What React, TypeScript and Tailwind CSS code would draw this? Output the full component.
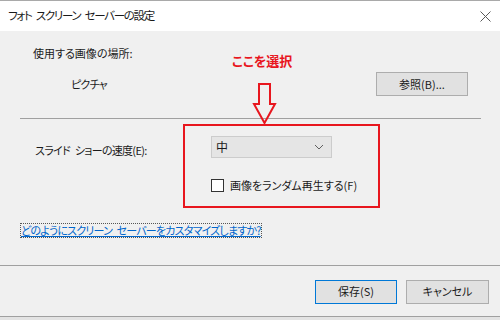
import React from 'react';

const font = { fontFamily: '"Noto Sans CJK JP", "Noto Sans", sans-serif' };

const ChevronDown = () => (
  <svg width="10" height="6" viewBox="0 0 10 6" fill="none">
    <path d="M1 1 L5 5 L9 1" stroke="#606060" strokeWidth="1" />
  </svg>
);

const CloseIcon = () => (
  <svg width="11" height="11" viewBox="0 0 11 11" fill="none">
    <path d="M0.5 0.5 L10.5 10.5 M10.5 0.5 L0.5 10.5" stroke="#5a5a5a" strokeWidth="1" />
  </svg>
);

const App: React.FC = () => {
  return (
    <div
      className="relative w-[500px] h-[320px] overflow-hidden bg-[#f0f0f0] border-t border-[#a9a9a9] text-[11px] text-[#1a1a1a] flex flex-col [font-feature-settings:'palt']"
      style={font}
    >
      {/* Title bar */}
      <div className="h-[30px] bg-white flex items-center justify-between pl-[8px] pr-[9px] shrink-0">
        <span className="leading-none text-[11.5px] tracking-[-1.3px] [word-spacing:3px]">フォト スクリーン セーバーの設定</span>
        <CloseIcon />
      </div>

      {/* Picture location */}
      <div className="pl-[33px] pt-[14px] leading-[16px]">使用する画像の場所:</div>
      <div className="flex items-center mt-[11px] pl-[71px] pr-[32px] h-[24px]">
        <span className="flex-1 leading-[16px] tracking-[-0.8px]">ピクチャ</span>
        <button className="w-[92px] h-[24px] bg-[#e1e1e1] border border-[#adadad] leading-none">
          参照(B)...
        </button>
      </div>

      <div className="mt-[22px] mx-[20px] mr-[19px] h-px bg-[#a0a0a0]" />

      {/* Slide show speed */}
      <div className="flex items-start mt-[5px]">
        <div className="w-[183px] pl-[35px] pt-[18px] leading-[16px] tracking-[-0.7px] [word-spacing:3px]">スライド ショーの速度(E):</div>
        <div className="w-[197px] h-[84px] border-2 border-[#e8161e] pl-[26px] pt-[10px]">
          <div className="w-[121px] h-[22px] bg-[#e5e5e5] border border-[#cccccc] flex items-center justify-between pl-[4px] pr-[7px]">
            <span className="leading-none text-[12px]">中</span>
            <ChevronDown />
          </div>
          <label className="flex items-center gap-[6px] mt-[19px]">
            <span className="w-[13px] h-[13px] bg-white border border-[#333333] shrink-0" />
            <span className="leading-[16px]">画像をランダム再生する(F)</span>
          </label>
        </div>
      </div>

      {/* Help link */}
      <div className="mt-[14px] pl-[20px]">
        <span className="inline-block border border-dotted border-[#555555] text-[#0066cc] underline leading-[13px] tracking-[-0.8px] [word-spacing:3px]">
          どのようにスクリーン セーバーをカスタマイズしますか?
        </span>
      </div>

      <div className="mt-[26px] h-px bg-[#a0a0a0]" />

      {/* Footer buttons */}
      <div className="flex justify-end gap-[9px] pr-[11px] pt-[14px]">
        <button className="w-[82px] h-[24px] bg-[#e1e1e1] border border-[#0078d7] leading-none">
          保存(S)
        </button>
        <button className="w-[83px] h-[24px] bg-[#e1e1e1] border border-[#adadad] leading-none">
          キャンセル
        </button>
      </div>
      <div className="mt-auto h-[4px] border-t border-[#a0a0a0] bg-[#e3e3e3]" />

      {/* Annotation: ここを選択 + arrow */}
      <div className="absolute left-[232px] top-[51px] text-[13px] font-bold text-[#e8161e] leading-[18px]">
        ここを選択
      </div>
      <svg className="absolute left-[251px] top-[82px]" width="26" height="42" viewBox="0 0 26 42" fill="none">
        <polygon
          points="8,1 19,1 19,21 24,21 13.5,40 3,21 8,21"
          stroke="#e8161e"
          strokeWidth="2"
          strokeLinejoin="miter"
        />
      </svg>
    </div>
  );
};

export default App;
